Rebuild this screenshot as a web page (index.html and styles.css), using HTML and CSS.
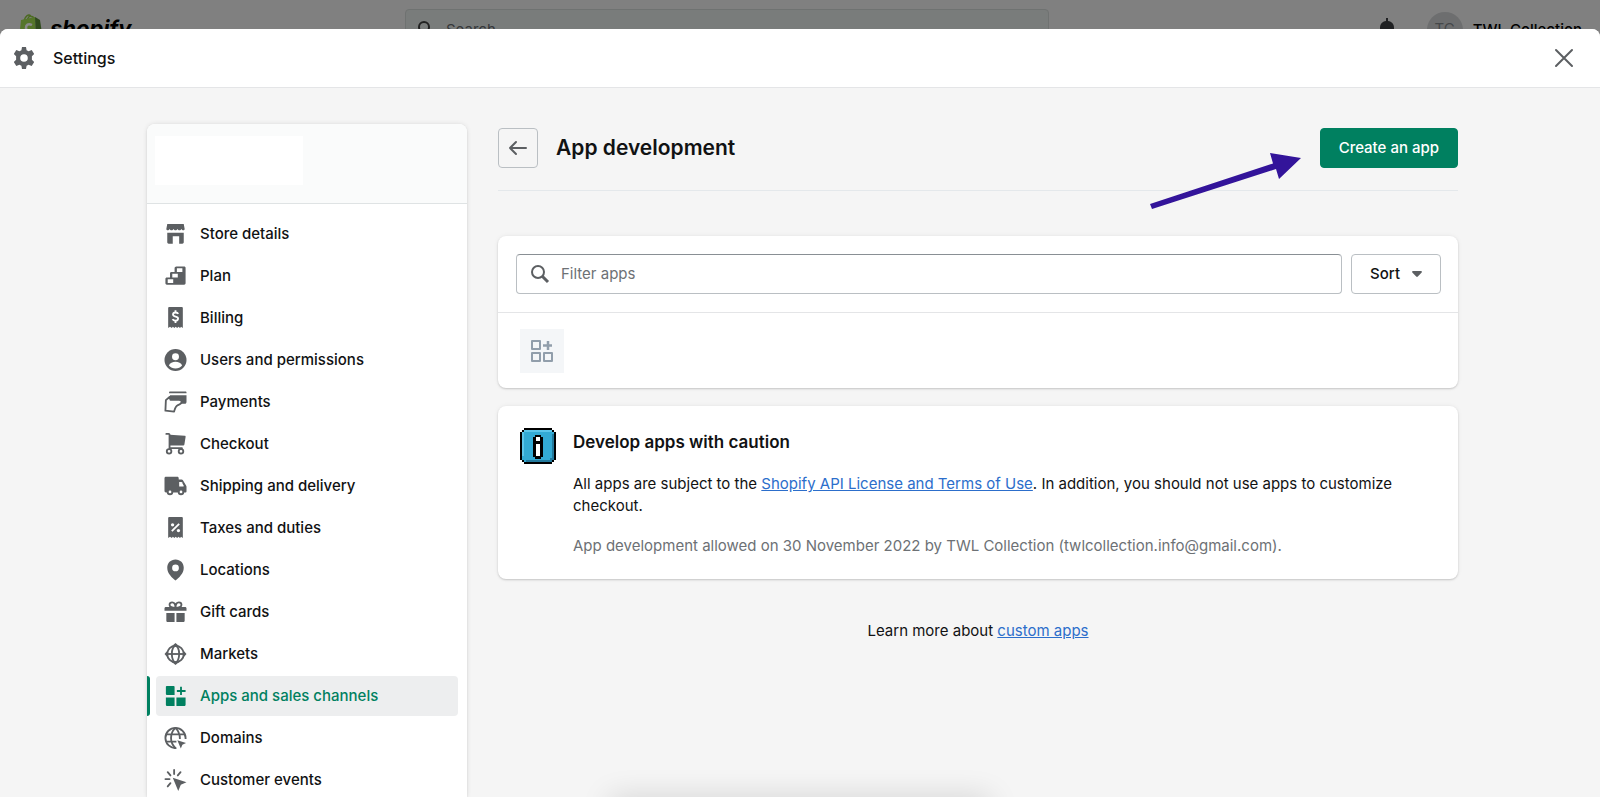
FILE: index.html
```
<!DOCTYPE html>
<html lang="en">
<head>
    <meta charset="UTF-8">
    <meta name="viewport" content="width=device-width, initial-scale=1.0">
    <title>Settings - App development</title>
    <link rel="stylesheet" href="styles.css">
</head>
<body>
    <div class="topbar">
        <a class="logo" href="#">
            <svg width="24" height="28" viewBox="0 0 24 28">
                <path d="M5 7C6 2 10 -1 12 2.500C14 2 15 4 15 6M8 7C9 3 11 1 12 2.500" fill="none" stroke="#4c6a21" stroke-width="1.500"/>
                <path d="M2 6l14-3 1 25-17-3z" fill="#55752a"/>
                <path d="M16 3l5 3 3 20-7 2z" fill="#2f4a1c"/>
                <path d="M13 11c-4-2-6 0-6 3 0 3 4 3 4 6 0 2-2 2-5 0" fill="none" stroke="#8a8a8a" stroke-width="2.500"/>
            </svg>
            <span>shopify</span>
        </a>
        <div class="search">
            <svg width="20" height="20" viewBox="0 0 20 20" fill="none" stroke="#222" stroke-width="2"><circle cx="8" cy="7" r="5"/><path d="M12 11l6 6"/></svg>
            <input type="search" placeholder="Search" aria-label="Search">
        </div>
        <div class="account">
            <svg width="20" height="22" viewBox="0 0 20 22" fill="#202123"><path d="M9 0h2v3c4 .5 6 3 6 7v5l2 3H1l2-3v-5c0-4 2-6.500 6-7z"/></svg>
            <span class="avatar">TC</span>
            <span class="account-name">TWL Collection</span>
        </div>
    </div>

    <div class="modal">
        <header class="modal-header">
            <svg width="24" height="24" viewBox="0 0 24 24" fill="#5c5f62"><path fill-rule="evenodd" d="M10 1h4l.6 3.200 2 1.100 3.100-1.200 2.500 3.800-2.300 2.300v3.600l2.300 2.300-2.500 3.800-3.100-1.200-2 1.100L14 23h-4l-.6-3.200-2-1.100-3.100 1.200-2.500-3.800 2.300-2.300v-3.600L1.800 7.900l2.500-3.800 3.100 1.200 2-1.100zM12 8.200a3.800 3.800 0 1 0 0 7.600 3.800 3.800 0 0 0 0-7.600z"/></svg>
            <h1>Settings</h1>
            <button class="close" aria-label="Close">
                <svg width="20" height="20" viewBox="0 0 20 20" fill="none" stroke="#5c5f62" stroke-width="2" stroke-linecap="round"><path d="M2 2l16 16M18 2L2 18"/></svg>
            </button>
        </header>

        <div class="content">
            <aside class="sidebar">
                <div class="store"><div class="store-name"></div></div>
                <nav>
                    <a href="#">
                        <svg viewBox="0 0 24 24"><path d="M3 1h18l1 5.500c0 .8-.8 1.500-1.500 1.500-1 0-1.500-.7-2-1.500-.5.900-1.200 1.500-2.200 1.500s-1.600-.6-2.200-1.500C13.600 7.400 13 8 12 8s-1.600-.6-2.100-1.500C9.300 7.400 8.700 8 7.700 8s-1.700-.6-2.200-1.500C5 7.300 4.500 8 3.500 8 2.700 8 2 7.300 2 6.500zM3 10.500h18v10.500c0 .8-.7 1.500-1.500 1.500H16v-8H9v8H4.500c-.8 0-1.500-.7-1.500-1.500z"/></svg>
                        Store details
                    </a>
                    <a href="#">
                        <svg viewBox="0 0 24 24"><path fill-rule="evenodd" d="M13 1.500h8.500c.8 0 1.500.7 1.500 1.500v17c0 .8-.7 1.500-1.500 1.500h-19C1.700 21.500 1 20.800 1 20v-5c0-.8.700-1.500 1.500-1.500H6V9c0-.8.700-1.500 1.500-1.500H11v-4c0-1.200.8-2 2-2zm.5 2v4h6v-4zM8.500 9.500v4h6v-4zM3.500 15.500v4h6v-4z"/></svg>
                        Plan
                    </a>
                    <a href="#">
                        <svg viewBox="0 0 24 24"><path d="M5 0h14c.6 0 1 .4 1 1v22l-2-1.500-1 1.500-2-1.500-1 1.500-2-1.500-1 1.500-2-1.500L8 23l-2-1.500L4 23V1c0-.6.400-1 1-1z"/><path class="line" d="M15 7.500C14.400 6.300 13.500 6 12 6c-1.700 0-2.700.8-2.700 2.200 0 3.200 5.500 1.500 5.500 4.400 0 1.500-1.200 2.400-2.800 2.400-1.600 0-2.600-.5-3.200-1.700M12 3.500v3M12 14.500v3"/></svg>
                        Billing
                    </a>
                    <a href="#">
                        <svg viewBox="0 0 24 24"><circle cx="12" cy="12" r="12"/><circle class="hole" cx="12" cy="8.500" r="3.800"/><path class="hole" d="M4.800 18c1-3 4-4.200 7.200-4.200s6.200 1.200 7.200 4.200c-1.800 2-4.300 3.200-7.200 3.200S6.600 20 4.800 18z"/></svg>
                        Users and permissions
                    </a>
                    <a href="#">
                        <svg viewBox="0 0 24 24"><path d="M6 .5h17c.5 0 1 .5 1 1v1H5v-1c0-.5.500-1 1-1zM6 4.500h18V12c0 1.500-1 2-2 2h-4.500l-1-4H5z"/><path d="M5.500 6.500L1.500 10 1 21.500l9.500 1c1.300-4.600 1.300-5.800 3.800-7 2.500-.9 4.700-1.500 4.400-4-.3-1.700-1.500-1.900-3-1.900H6.500z" fill="#fff" stroke="#5c5f62" stroke-width="2" stroke-linejoin="round"/></svg>
                        Payments
                    </a>
                    <a href="#">
                        <svg viewBox="0 0 24 24"><path d="M6 2l16 1c.7 0 1.200.6 1 1.300l-1.300 8.200c-.1.600-.6 1-1.200 1H6z"/><path d="M2 1h2.500c.8 0 1 .3 1 1v14.500H19" fill="none" stroke="#5c5f62" stroke-width="2" stroke-linecap="round"/><circle cx="5" cy="20" r="2.500" fill="#fff" stroke="#5c5f62" stroke-width="2"/><circle cx="18" cy="20" r="2.500" fill="#fff" stroke="#5c5f62" stroke-width="2"/></svg>
                        Checkout
                    </a>
                    <a href="#">
                        <svg viewBox="0 0 24 24"><path d="M1.500 2H14c.8 0 1.500.7 1.500 1.500V5h3.200c.6 0 1.100.3 1.400.8l3.600 6c.2.400.3.700.3 1.200v5c0 .6-.4 1-1 1H1.500C.7 19 0 18.300 0 17.500v-14C0 2.700.7 2 1.500 2z"/><path class="hole" d="M16 7.500h2c.4 0 .7.200.9.500l2.100 3.700c.2.400 0 .8-.5.800H16z"/><circle cx="6" cy="18.500" r="2.500" fill="#fff" stroke="#5c5f62" stroke-width="2"/><circle cx="18" cy="18.500" r="2.500" fill="#fff" stroke="#5c5f62" stroke-width="2"/></svg>
                        Shipping and delivery
                    </a>
                    <a href="#">
                        <svg viewBox="0 0 24 24"><path d="M5 0h14c.6 0 1 .4 1 1v22l-2-1.500-1 1.500-2-1.500-1 1.500-2-1.500-1 1.500-2-1.500L8 23l-2-1.500L4 23V1c0-.6.400-1 1-1z"/><path class="line" d="M8 15.500l8-8"/><circle class="hole" cx="8.800" cy="8.500" r="1.800"/><circle class="hole" cx="15.200" cy="14.800" r="1.800"/></svg>
                        Taxes and duties
                    </a>
                    <a href="#">
                        <svg viewBox="0 0 24 24"><path fill-rule="evenodd" d="M12 .5c-5.300 0-9 3.900-9 9C3 16 8.500 20.500 12 23.500c3.500-3 9-7.500 9-14 0-5.100-3.700-9-9-9zM12 6a3.700 3.700 0 1 1 0 7.400A3.700 3.700 0 0 1 12 6z"/></svg>
                        Locations
                    </a>
                    <a href="#">
                        <svg viewBox="0 0 24 24"><path d="M1.500 6.500h21c.8 0 1.500.7 1.500 1.500v2.500H0V8c0-.8.700-1.500 1.500-1.500zM2 13h9v10H3.500c-.8 0-1.500-.7-1.500-1.500zM13 13h9v8.500c0 .8-.7 1.500-1.500 1.500H13z"/><path d="M12 7.500c-4 0-6.500-.8-6.500-3.300 0-1.700 1.200-2.700 2.800-2.700C11 1.500 12 3.500 12 7.500c0-4 1-6 3.700-6 1.600 0 2.800 1 2.800 2.700 0 2.500-2.500 3.300-6.500 3.300z" fill="none" stroke="#5c5f62" stroke-width="2"/></svg>
                        Gift cards
                    </a>
                    <a href="#">
                        <svg viewBox="0 0 24 24"><path d="M12 0l3.500 3h-7zM12 24l3.500-3h-7zM0 12l3-3.500v7zM24 12l-3-3.500v7z"/><g fill="none" stroke="#5c5f62" stroke-width="2"><circle cx="12" cy="12" r="9"/><ellipse cx="12" cy="12" rx="4" ry="9"/><path d="M2 12h20"/></g></svg>
                        Markets
                    </a>
                    <a href="#" class="active" aria-current="page">
                        <svg viewBox="0 0 24 24"><path d="M2.500 1H10c.6 0 1 .4 1 1v9H3c-.8 0-1.500-.7-1.500-1.500V2c0-.6.400-1 1-1zM1.500 13.500H11V23H3c-.8 0-1.500-.7-1.500-1.500zM13 13.500h10v8c0 .8-.7 1.500-1.500 1.500H13zM17 2h2v3.500h4v2h-4V11h-2V7.500h-3.500v-2H17z"/></svg>
                        Apps and sales channels
                    </a>
                    <a href="#">
                        <svg viewBox="0 0 24 24"><g fill="none" stroke="#5c5f62" stroke-width="2"><path d="M13 23C6.500 23.500 1 18.500 1 12S6 1 12 1s11 5 11 11v1"/><path d="M12 1C5.500 7 5.500 17 12 23M12 1c3.500 3.500 4.800 7.500 4.800 12M2 8h20M2 16h11"/></g><path d="M14 14.500l9.500 3-4 1.800-1.700 4.200z"/></svg>
                        Domains
                    </a>
                    <a href="#">
                        <svg viewBox="0 0 24 24"><path d="M9 9.500l15 5-6.200 2.800L15 24z"/><path d="M10.500 1v4.500M3.500 3.500l3 3.500M1 11h4.500M3.500 19l3-3.500M17.500 3.500L14.500 7" fill="none" stroke="#5c5f62" stroke-width="2" stroke-linecap="round"/></svg>
                        Customer events
                    </a>
                </nav>
            </aside>

            <main>
                <div class="page-header">
                    <button class="btn back" aria-label="Back">
                        <svg width="20" height="20" viewBox="0 0 20 20" fill="none" stroke="#5c5f62" stroke-width="2" stroke-linecap="round" stroke-linejoin="round"><path d="M18 10H2M8 4l-6 6 6 6"/></svg>
                    </button>
                    <h2>App development</h2>
                    <button class="btn primary">Create an app</button>
                    <svg class="pointer" width="152" height="58" viewBox="0 0 152 58" fill="#33149a"><path d="M0 51l123-40.500L120 0l31 5-22 21-3-10L2 56z"/></svg>
                </div>

                <section class="card">
                    <div class="filters">
                        <div class="filter">
                            <svg width="20" height="20" viewBox="0 0 20 20" fill="none" stroke="#5c5f62" stroke-width="2"><circle cx="8" cy="8" r="6"/><path d="M12 12l6 6" stroke-width="3"/></svg>
                            <input type="text" placeholder="Filter apps" aria-label="Filter apps">
                        </div>
                        <button class="btn sort">Sort
                            <svg width="10" height="6" viewBox="0 0 10 6" fill="#5c5f62"><path d="M1 0h8c.8 0 1.200.8.700 1.400L5.800 5.600c-.4.500-1.200.5-1.600 0L.3 1.400C-.2.800.2 0 1 0z"/></svg>
                        </button>
                    </div>
                    <div class="app-row">
                        <div class="thumb">
                            <svg width="24" height="24" viewBox="0 0 24 24" fill="none" stroke="#919eab" stroke-width="2" stroke-linejoin="round"><path d="M2 2h8v8H2zM2 14h8v8H2zM14 14h8v8h-8z"/><path d="M18 2v9M13 6.500h9" stroke-width="2.500"/></svg>
                        </div>
                    </div>
                </section>

                <section class="card notice">
                    <svg width="36" height="36" viewBox="0 0 36 36" shape-rendering="crispEdges">
                        <path d="M4 0h28v2h2v2h2v28h-2v2h-2v2H4v-2H2v-2H0V4h2V2h2z" fill="#000"/>
                        <path d="M4 2h28v2h2v28h-2v2H4v-2H2V4h2z" fill="#33aad4"/>
                        <path d="M4 2h28v2H4v24H2V4h2z" fill="#5cc5ea"/>
                        <path d="M32 6h2v26h-2v2H6v-2h24v-2h2z" fill="#237a9d"/>
                        <path d="M15 7h6v2h2v20h-2v2h-6v-2h-2V9h2z" fill="#000"/>
                        <path d="M16 9h4v4h-4zM16 16h4v12h-4z" fill="#fff"/>
                    </svg>
                    <div>
                        <h3>Develop apps with caution</h3>
                        <p>All apps are subject to the <a href="#">Shopify API License and Terms of Use</a>. In addition, you should not use apps to customize checkout.</p>
                        <p class="subdued">App development allowed on 30 November 2022 by TWL Collection (twlcollection.info@gmail.com).</p>
                    </div>
                </section>

                <p class="learn-more">Learn more about <a href="#">custom apps</a></p>
            </main>
        </div>
    </div>
    <div class="bottom-shadow"></div>
</body>
</html>
```
FILE: styles.css
```
* {
    box-sizing: border-box;
}

body {
    margin: 0;
    height: 100vh;
    overflow: hidden;
    display: flex;
    flex-direction: column;
    background-color: #808080;
    color: #111213;
    font-family: Inter, "Liberation Sans", sans-serif;
    font-size: 15px;
    line-height: 22px;
}

h1, h2, h3, p {
    margin: 0;
}

a {
    color: #2c6ecb;
}

button, input {
    font: inherit;
    color: inherit;
}

/* store bar behind the modal */
.topbar {
    flex: none;
    height: 29px;
    overflow: hidden;
    display: grid;
    grid-template-columns: 386px minmax(0, 644px) 1fr;
    align-items: start;
    padding: 9px 18px 0 19px;
}

.logo {
    display: flex;
    gap: 7px;
    padding-top: 5px;
    color: #000;
    font-size: 22px;
    line-height: 28px;
    font-weight: 700;
    font-style: italic;
    text-decoration: none;
}

.search {
    display: flex;
    gap: 10px;
    height: 40px;
    padding: 10px;
    border: 1px solid #6f7271;
    border-radius: 4px;
    background-color: #797c7b;
}

.search input {
    flex: 1;
    height: 20px;
    padding: 0;
    border: none;
    background: none;
}

.search input::placeholder {
    color: #36383a;
    opacity: 1;
}

.account {
    display: flex;
    justify-content: flex-end;
    padding-top: 3px;
}

.account svg {
    margin: 6px 30px 0 0;
}

.avatar {
    width: 36px;
    height: 36px;
    margin-right: 10px;
    border-radius: 50%;
    background-color: #6d6e6f;
    color: #45484a;
    line-height: 34px;
    text-align: center;
}

.account-name {
    line-height: 36px;
    color: #000;
    font-weight: 500;
}

.modal {
    flex: 1;
    min-height: 0;
    overflow: hidden;
    display: flex;
    flex-direction: column;
    border-radius: 8px 8px 0 0;
    background-color: #f5f5f5;
}

.modal-header {
    flex: none;
    display: flex;
    align-items: center;
    gap: 17px;
    height: 59px;
    padding: 0 16px 0 12px;
    border-bottom: 1px solid #e4e5e7;
    background-color: #fff;
}

.modal-header h1 {
    flex: 1;
    font-size: 16px;
    font-weight: 500;
}

.close {
    display: flex;
    padding: 10px;
    border: none;
    background: none;
    cursor: pointer;
}

.content {
    flex: 1;
    min-height: 0;
    display: flex;
    gap: 31px;
    padding: 36px 142px 0 147px;
}

.sidebar {
    flex: none;
    width: 320px;
    border-radius: 8px 8px 0 0;
    background-color: #fff;
    box-shadow: 0 0 5px rgba(23, 24, 24, 0.1), 0 1px 2px rgba(0, 0, 0, 0.1);
}

.store {
    padding: 12px 8px 18px;
    border-bottom: 1px solid #dfe3e4;
    border-radius: 8px 8px 0 0;
    background-color: #fafbfb;
}

.store-name {
    width: 148px;
    height: 49px;
    background-color: #fff;
}

nav {
    display: flex;
    flex-direction: column;
    gap: 2px;
    padding: 10px 9px;
}

nav a {
    position: relative;
    display: flex;
    align-items: center;
    gap: 13px;
    height: 40px;
    padding: 0 8px;
    border-radius: 4px;
    color: #111213;
    font-weight: 500;
    text-decoration: none;
}

nav svg {
    width: 23px;
    height: 22px;
    fill: #5c5f62;
}

nav .hole {
    fill: #fff;
}

nav .line {
    fill: none;
    stroke: #fff;
    stroke-width: 2;
}

nav .active {
    background-color: #edeeef;
    color: #008060;
}

nav .active svg {
    fill: #008060;
}

nav .active::before {
    content: "";
    position: absolute;
    left: -9px;
    top: 0;
    bottom: 0;
    width: 3px;
    border-radius: 0 3px 3px 0;
    background-color: #008060;
}

main {
    flex: 1;
    min-width: 0;
}

.page-header {
    position: relative;
    display: flex;
    align-items: center;
    gap: 18px;
    padding: 4px 0 22px;
    border-bottom: 1px solid #e4e8eb;
    margin-bottom: 45px;
}

.page-header h2 {
    flex: 1;
    font-size: 21px;
    line-height: 28px;
    font-weight: 600;
}

.btn {
    display: flex;
    align-items: center;
    justify-content: center;
    height: 40px;
    border: 1px solid #babfc3;
    border-radius: 4px;
    background-color: #fff;
    font-weight: 500;
    cursor: pointer;
}

.back {
    width: 40px;
    padding: 0;
    background-color: transparent;
}

.primary {
    padding: 0 18px;
    border-color: #008060;
    background-color: #008060;
    color: #fff;
}

/* hand-drawn arrow pointing at the create button */
.pointer {
    position: absolute;
    right: 156px;
    top: 29px;
}

.card {
    margin-bottom: 18px;
    border-radius: 8px;
    background-color: #fff;
    box-shadow: 0 0 5px rgba(23, 24, 24, 0.06), 0 1px 2px rgba(0, 0, 0, 0.17);
}

.filters {
    display: flex;
    gap: 9px;
    padding: 18px 17px 18px 18px;
    border-bottom: 1px solid #e4e5e7;
}

.filter {
    flex: 1;
    display: flex;
    align-items: center;
    gap: 11px;
    height: 40px;
    padding: 0 13px;
    border: 1px solid #babfc3;
    border-top-color: #898f94;
    border-radius: 4px;
}

.filter input {
    flex: 1;
    padding: 0;
    border: none;
    outline: none;
    background: none;
}

.filter input::placeholder {
    color: #6d7175;
    opacity: 1;
}

.sort {
    gap: 12px;
    padding: 0 18px;
}

.app-row {
    padding: 16px 22px 15px;
}

.thumb {
    display: flex;
    align-items: center;
    justify-content: center;
    width: 44px;
    height: 44px;
    background-color: #f4f6f8;
}

.notice {
    display: flex;
    gap: 17px;
    padding: 22px;
}

.notice > svg {
    flex: none;
}

.notice h3 {
    margin: 3px 0 20px;
    font-size: 17px;
    font-weight: 600;
}

.notice p + p {
    margin-top: 18px;
}

.notice .subdued {
    color: #6d7175;
}

.learn-more {
    padding-top: 23px;
    text-align: center;
}

/* edge of a floating bar just below the window */
.bottom-shadow {
    position: fixed;
    left: 50%;
    bottom: -20px;
    width: 380px;
    height: 18px;
    transform: translateX(-50%);
    box-shadow: 0 0 30px rgba(0, 0, 0, 0.18);
}
```
